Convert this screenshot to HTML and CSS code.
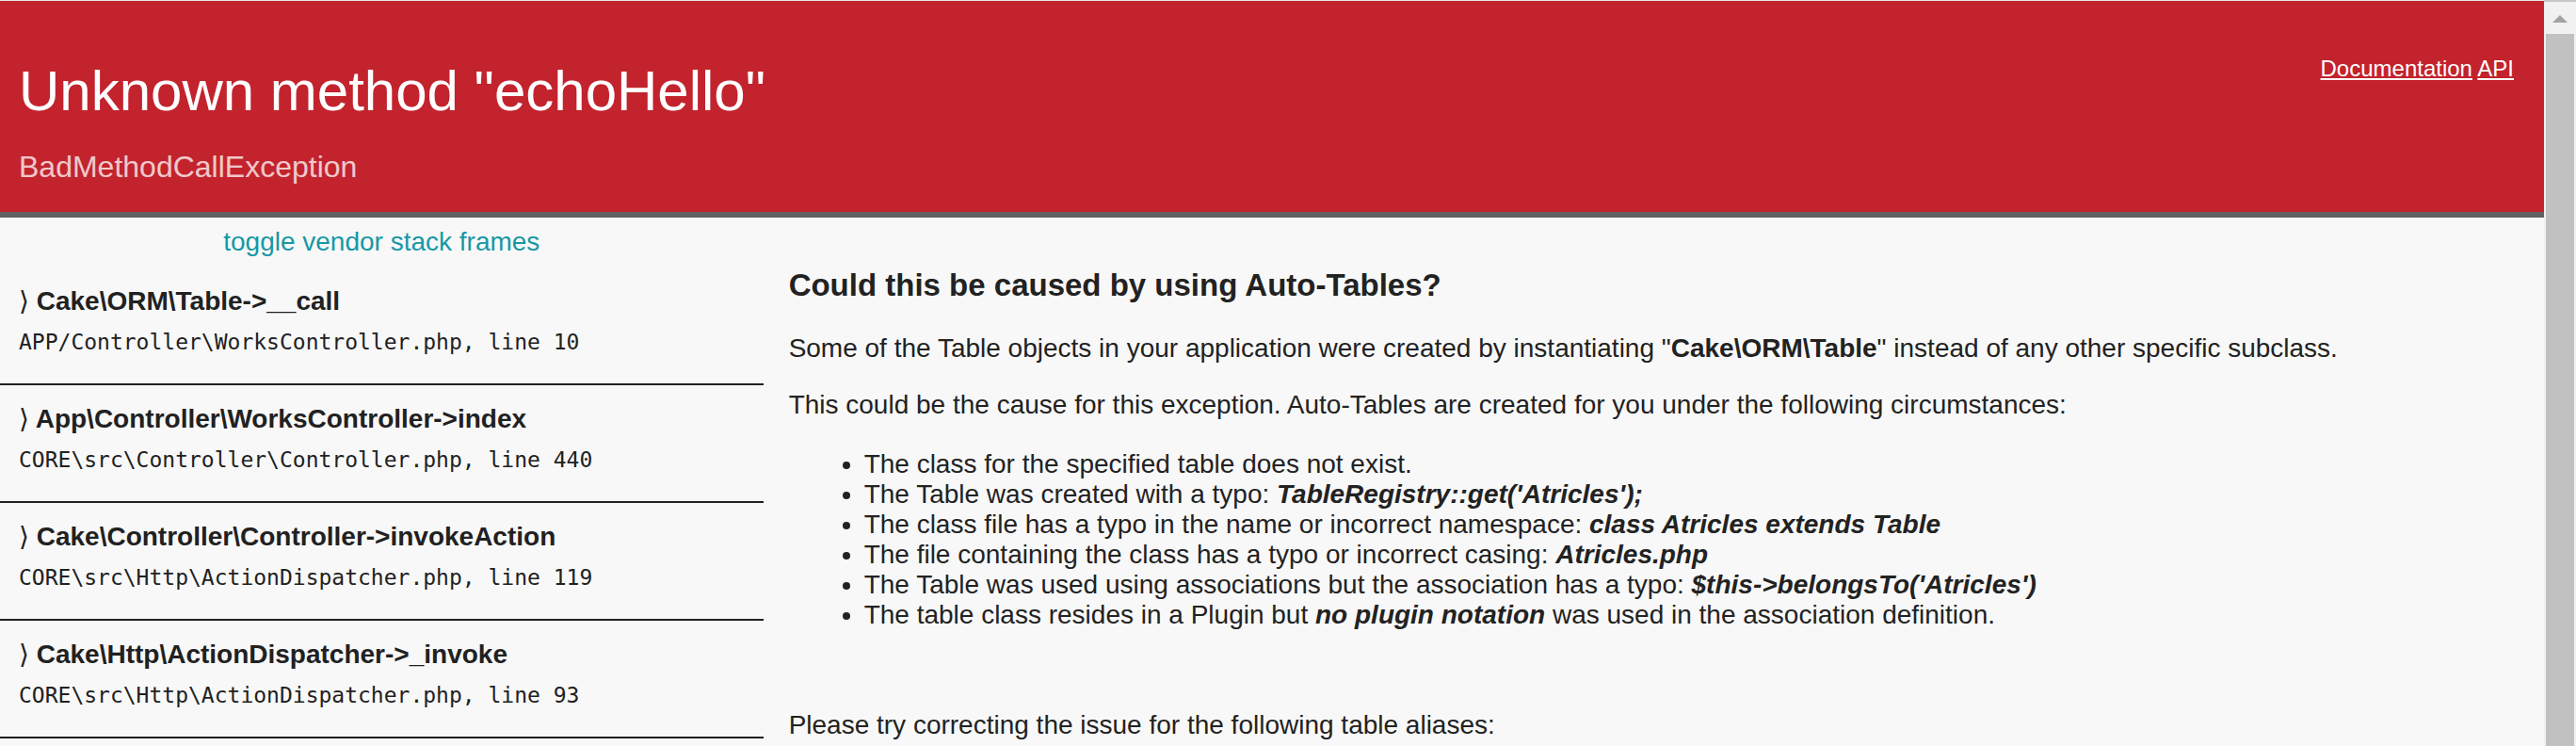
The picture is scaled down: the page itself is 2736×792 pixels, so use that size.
FILE: index.html
```html
<!DOCTYPE html>
<html>
<head>
<meta charset="utf-8">
<title>Unknown method "echoHello"</title>
<link rel="stylesheet" href="styles.css">
</head>
<body>
<div class="page">
  <div class="main">
    <div class="topline"></div>
    <header class="header">
      <div class="header-text">
        <h1 class="header-title">Unknown method "echoHello"</h1>
        <span class="header-type">BadMethodCallException</span>
      </div>
      <div class="header-help">
        <a href="#">Documentation</a> <a href="#">API</a>
      </div>
    </header>
    <div class="body-row">
      <nav class="error-nav">
        <a href="#" class="toggle-vendor-frames">toggle vendor stack frames</a>
        <ul class="stack-trace">
          <li class="stack-frame">
            <a href="#">
              <span class="stack-function"><span class="rang">&#x27E9;</span> Cake\ORM\Table-&gt;__call</span>
              <span class="stack-file">APP/Controller\WorksController.php, line 10</span>
            </a>
          </li>
          <li class="stack-frame">
            <a href="#">
              <span class="stack-function"><span class="rang">&#x27E9;</span> App\Controller\WorksController-&gt;index</span>
              <span class="stack-file">CORE\src\Controller\Controller.php, line 440</span>
            </a>
          </li>
          <li class="stack-frame">
            <a href="#">
              <span class="stack-function"><span class="rang">&#x27E9;</span> Cake\Controller\Controller-&gt;invokeAction</span>
              <span class="stack-file">CORE\src\Http\ActionDispatcher.php, line 119</span>
            </a>
          </li>
          <li class="stack-frame">
            <a href="#">
              <span class="stack-function"><span class="rang">&#x27E9;</span> Cake\Http\ActionDispatcher-&gt;_invoke</span>
              <span class="stack-file">CORE\src\Http\ActionDispatcher.php, line 93</span>
            </a>
          </li>
        </ul>
      </nav>
      <div class="error-contents">
        <h2 class="contents-title">Could this be caused by using Auto-Tables?</h2>
        <p>Some of the Table objects in your application were created by instantiating "<strong>Cake\ORM\Table</strong>" instead of any other specific subclass.</p>
        <p>This could be the cause for this exception. Auto-Tables are created for you under the following circumstances:</p>
        <ul class="causes">
          <li>The class for the specified table does not exist.</li>
          <li>The Table was created with a typo: <strong><em>TableRegistry::get('Atricles');</em></strong></li>
          <li>The class file has a typo in the name or incorrect namespace: <strong><em>class Atricles extends Table</em></strong></li>
          <li>The file containing the class has a typo or incorrect casing: <strong><em>Atricles.php</em></strong></li>
          <li>The Table was used using associations but the association has a typo: <strong><em>$this-&gt;belongsTo('Atricles')</em></strong></li>
          <li>The table class resides in a Plugin but <strong><em>no plugin notation</em></strong> was used in the association definition.</li>
        </ul>
        <p class="aliases">Please try correcting the issue for the following table aliases:</p>
      </div>
    </div>
  </div>
  <div class="scrollbar">
    <div class="scroll-arrow"></div>
    <div class="scroll-thumb"></div>
  </div>
</div>
</body>
</html>
```

FILE: styles.css
```css
html, body {
  margin: 0;
  padding: 0;
  height: 100%;
  overflow: hidden;
}

body {
  font-family: "Liberation Sans", Arial, Helvetica, sans-serif;
  font-size: 28px;
  color: #222;
  background-color: #f8f8f8;
}

.page {
  display: flex;
  height: 100vh;
  overflow: hidden;
}

.main {
  flex: 1 1 auto;
  min-width: 0;
  display: flex;
  flex-direction: column;
}

.topline {
  height: 1px;
  background: #b9b9b9;
  border-bottom: 1px solid #e6e6e6;
}

.header {
  display: flex;
  justify-content: space-between;
  align-items: flex-start;
  background-color: #c3232d;
  color: #ffffff;
  padding: 32px 20px;
  border-bottom: 6px solid #626262;
}

.header-title {
  margin: 0;
  font-weight: normal;
  font-size: 60px;
  line-height: 128px;
}

.header-type {
  display: block;
  opacity: 0.75;
  font-size: 32px;
  line-height: 32px;
}

.header-help {
  margin-top: 28px;
  margin-right: 12px;
  font-size: 24px;
  line-height: 24px;
}

.header-help a {
  color: #ffffff;
}

.body-row {
  display: flex;
  align-items: flex-start;
}

.error-nav {
  flex: 0 0 30%;
}

.toggle-vendor-frames {
  display: block;
  color: #1798a5;
  text-align: center;
  text-decoration: none;
  padding: 10px 0 11px;
  line-height: 32px;
}

.stack-trace {
  list-style: none;
  margin: 0;
  padding: 0;
}

.stack-frame {
  padding: 20px;
  border-bottom: 2px solid #212121;
}

.stack-frame a {
  display: block;
  color: #212121;
  text-decoration: none;
}

.stack-function {
  display: block;
  font-weight: bold;
  line-height: 32px;
  margin-bottom: 12px;
  white-space: nowrap;
}

.rang {
  font-family: "DejaVu Sans", sans-serif;
  font-weight: normal;
}

.stack-file {
  display: block;
  font-family: "DejaVu Sans Mono", "Liberation Mono", monospace;
  font-size: 23px;
  line-height: 31px;
  margin-bottom: 8px;
  white-space: nowrap;
}

.error-contents {
  flex: 0 0 68%;
  margin-left: auto;
  padding: 20px 1%;
  line-height: 32px;
}

.contents-title {
  font-size: 33px;
  font-weight: bold;
  line-height: 37px;
  margin: 33px 0 33px;
}

.error-contents p {
  margin: 28px 0;
}

.causes {
  margin: 31px 0 28px;
  padding-left: 80px;
}

.causes li {
  margin: 0;
}

.error-contents .aliases {
  margin-top: 85px;
}

.scrollbar {
  flex: 0 0 34px;
  display: flex;
  flex-direction: column;
  align-items: center;
  background: #f1f1f1;
  border-top: 2px solid #c8c8c8;
}

.scroll-arrow {
  margin-top: 14px;
  width: 0;
  height: 0;
  border-left: 8px solid transparent;
  border-right: 8px solid transparent;
  border-bottom: 8px solid #a3a3a3;
}

.scroll-thumb {
  margin-top: 12px;
  width: 30px;
  flex: 1 1 auto;
  background: #c1c1c1;
}
```
